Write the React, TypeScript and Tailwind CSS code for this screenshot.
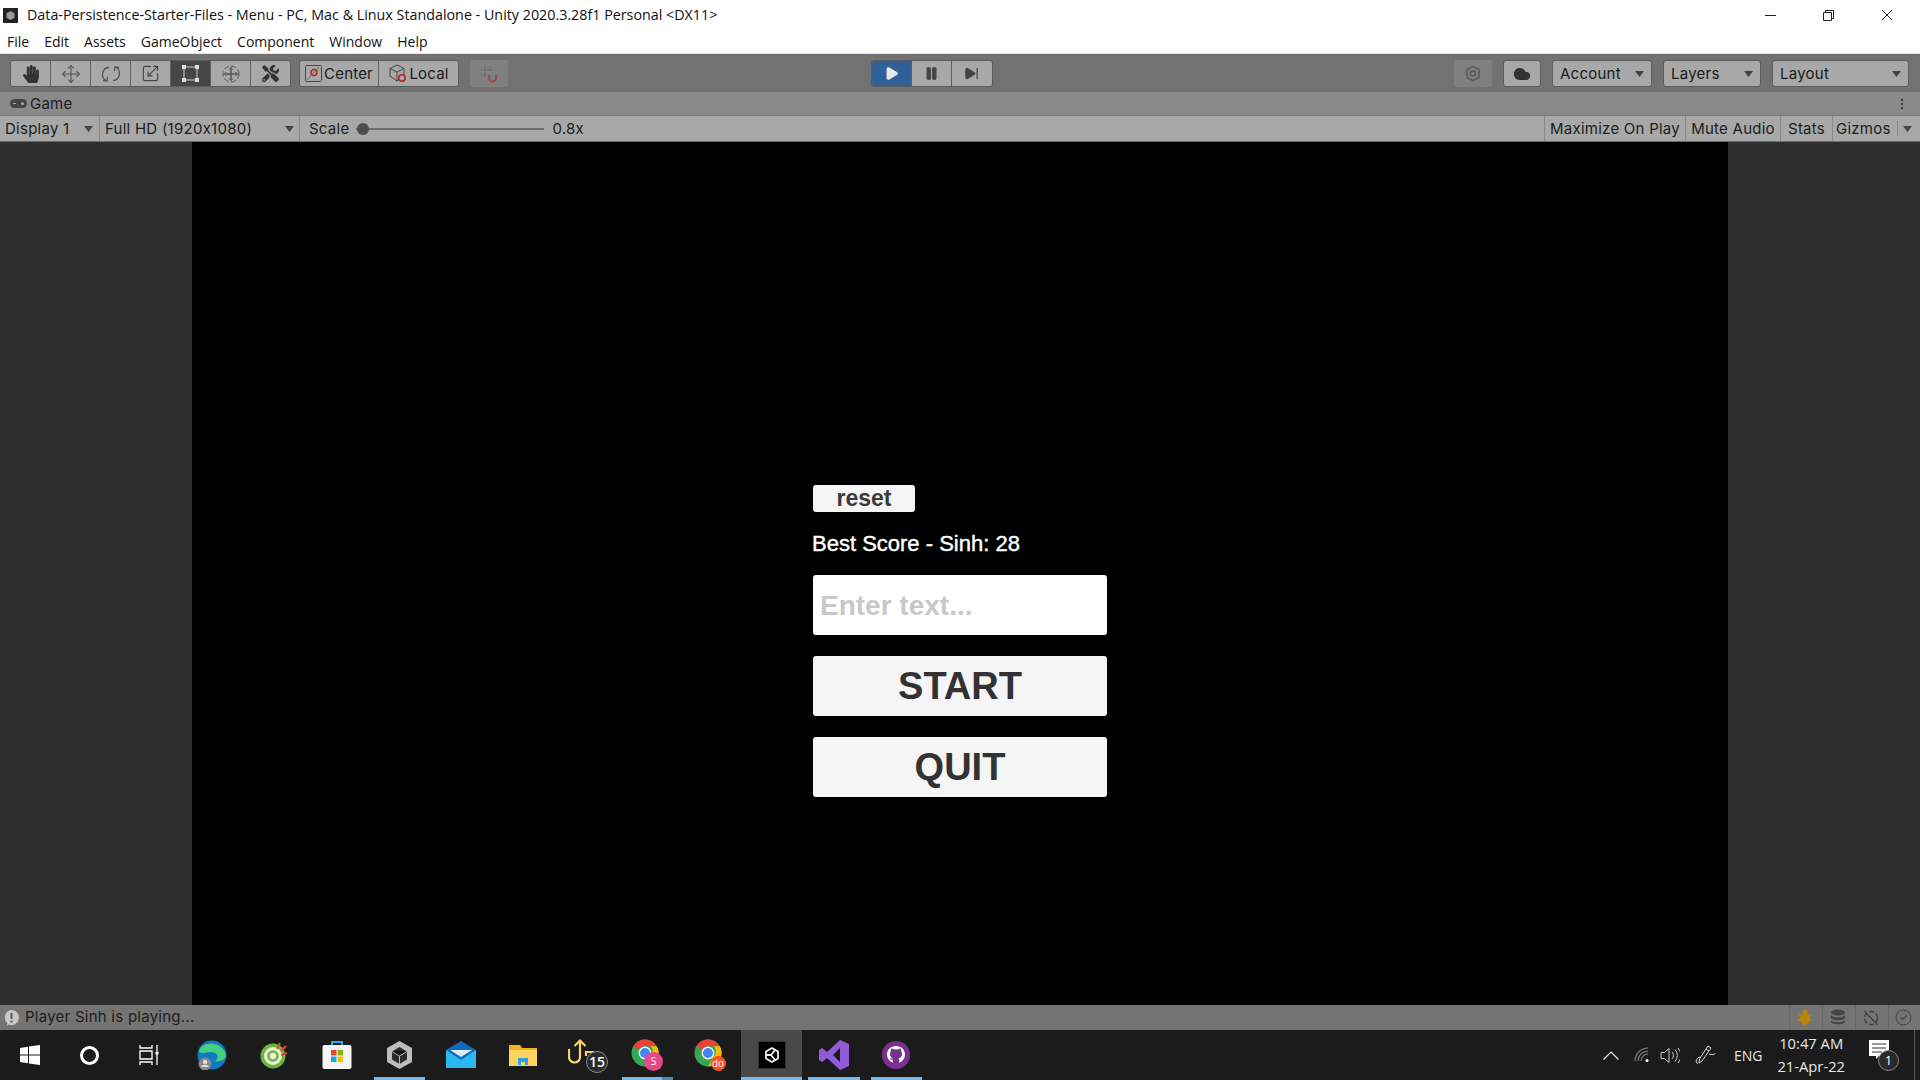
import React from "react";
import { Move, Scaling, Cloud, Play, Pause, SkipForward, MoreVertical } from "lucide-react";
import { FaHandPaper, FaTools } from "react-icons/fa";

const Caret = ({ className = "" }: { className?: string }) => (
  <svg width="9" height="6" viewBox="0 0 9 6" className={className}><path d="M0 0h9L4.5 6z" fill="#444" /></svg>
);

const ToolCell = ({ children, active, w = "w-[40px]", last }: { children: React.ReactNode; active?: boolean; w?: string; last?: boolean }) => (
  <div className={`${w} h-full flex items-center justify-center ${active ? "bg-[#464646]" : "bg-[#a8a8a8]"} ${last ? "" : "border-r border-[#636363]"}`}>{children}</div>
);

const Dropdown = ({ label, w }: { label: string; w: string }) => (
  <div className={`${w} h-[27px] rounded-[3px] bg-[#a8a8a8] border border-[#5c5c5c] flex items-center justify-between pl-[7px] pr-[7px] text-[15px] tracking-[0.25px] text-[#1a1a1a]`}>
    <span className="pt-[1px]">{label}</span><Caret />
  </div>
);

const GameBarCell = ({ children, cls }: { children: React.ReactNode; cls: string }) => (
  <div className={`h-full flex items-center border-r border-[#8a8a8a] text-[15px] tracking-[0.25px] text-[#1c1c1c] whitespace-nowrap ${cls}`}>{children}</div>
);

const TaskItem = ({ children, w = "w-[62px]", bar, active, stacked, cls = "" }: { children?: React.ReactNode; w?: string; bar?: boolean; active?: boolean; stacked?: boolean; cls?: string }) => (
  <div className={`${w} h-full relative flex items-center justify-center ${active ? "bg-[#494949]" : ""} ${cls}`}>
    {children}
    {bar && <div className={`absolute bottom-0 ${active ? "left-0 right-0" : "left-[6px] right-[5px]"} h-[3px] bg-[#76b9ed]`} />}
    {stacked && <div className="absolute bottom-0 right-[5px] w-[11px] h-[3px] bg-[#4e87b5]" />}
  </div>
);

const ChromeIcon = () => (
  <svg width="28" height="28" viewBox="0 0 28 28">
    <circle cx="14" cy="14" r="13.5" fill="#34a853" />
    <path d="M14 .5A13.5 13.5 0 0 1 25.7 7.2H14a7 7 0 0 0-6.2 3.6L2.300 7.200A13.500 13.500 0 0 1 14 .5z" fill="#ea4335" />
    <path d="M25.7 7.2A13.5 13.5 0 0 1 14 27.5l6-10.5a7 7 0 0 0 0-9.8z" fill="#fbbc04" />
    <circle cx="14" cy="14" r="6.4" fill="#fff" />
    <circle cx="14" cy="14" r="5" fill="#4285f4" />
  </svg>
);

export default function App() {
  return (
    <div className="w-[1920px] h-[1080px] overflow-hidden flex flex-col bg-white font-['Inter',sans-serif]">
      {/* Title bar */}
      <div className="h-[30px] flex items-center justify-between bg-white shrink-0">
        <div className="flex items-center">
          <div className="ml-[3px] w-[15px] h-[15px] bg-[#222] flex items-center justify-center">
            <svg width="11" height="11" viewBox="0 0 11 11"><path d="M5.5 1l4 2.300v4.400l-4 2.300-4-2.300V3.300z" fill="#999" /></svg>
          </div>
          <span className="ml-[9px] text-[14.3px] text-[#111] font-['Open_Sans',sans-serif] whitespace-nowrap">Data-Persistence-Starter-Files - Menu - PC, Mac &amp; Linux Standalone - Unity 2020.3.28f1 Personal &lt;DX11&gt;</span>
        </div>
        <div className="flex items-center gap-[47px] pr-[27px]">
          <svg width="11" height="11" viewBox="0 0 11 11"><path d="M0 5.5h11" stroke="#222" /></svg>
          <svg width="11" height="11" viewBox="0 0 11 11" fill="none" stroke="#222"><path d="M.5 2.5h8v8h-8zM2.500 2.500v-2h8v8h-2" /></svg>
          <svg width="12" height="12" viewBox="0 0 12 12"><path d="M1 1l10 10M11 1L1 11" stroke="#222" /></svg>
        </div>
      </div>
      {/* Menu */}
      <div className="h-[24px] flex items-center gap-[15px] pl-[7px] bg-white border-b border-[#e4e4e4] text-[14px] text-[#111] font-['Open_Sans',sans-serif] shrink-0 pb-[1px]">
        <span>File</span><span>Edit</span><span>Assets</span><span>GameObject</span><span>Component</span><span>Window</span><span>Help</span>
      </div>
      {/* Toolbar */}
      <div className="h-[38px] bg-[#727272] flex items-center justify-between pl-[10px] pr-[11px] shrink-0 pt-[1px]">
        <div className="flex items-center flex-1">
          <div className="flex h-[27px] rounded-[3px] overflow-hidden border border-[#5c5c5c]">
            <ToolCell><FaHandPaper size={18} color="#333" /></ToolCell>
            <ToolCell><Move size={20} stroke="#555" strokeWidth={1.3} /></ToolCell>
            <ToolCell>
              <svg width="20" height="20" viewBox="0 0 20 20" fill="none" stroke="#555" strokeWidth="1.300"><path d="M8 3.500A7 7 0 0 0 6 17l.5-4M6 17l-4-.5" /><path d="M12 16.500A7 7 0 0 0 14 3l-.5 4M14 3l4 .5" /></svg>
            </ToolCell>
            <ToolCell><Scaling size={19} stroke="#444" strokeWidth={1.4} /></ToolCell>
            <ToolCell active>
              <svg width="17" height="17" viewBox="0 0 17 17" fill="#ddd"><path d="M2 2h13v13H2z" fill="none" stroke="#ccc" /><rect x="0" y="0" width="4" height="4" /><rect x="13" y="0" width="4" height="4" /><rect x="0" y="13" width="4" height="4" /><rect x="13" y="13" width="4" height="4" /></svg>
            </ToolCell>
            <ToolCell>
              <svg width="20" height="20" viewBox="0 0 20 20" fill="none" stroke="#555"><circle cx="10" cy="10" r="8" strokeDasharray="5 2.500" /><path d="M10 3.500v13M3.500 10h13" strokeWidth="1.500" /><path d="M8 5.500l2-2 2 2M8 14.500l2 2 2-2M5.500 8l-2 2 2 2M14.500 8l2 2-2 2" /></svg>
            </ToolCell>
            <ToolCell w="w-[39px]" last><FaTools size={17} color="#333" /></ToolCell>
          </div>
          <div className="flex h-[27px] ml-[8px] rounded-[3px] overflow-hidden border border-[#5c5c5c] text-[15px] tracking-[0.2px] text-[#1a1a1a]">
            <ToolCell w="w-[79px]">
              <span className="flex items-center gap-[2px]">
                <svg width="17" height="17" viewBox="0 0 17 17" fill="none"><rect x=".5" y=".5" width="16" height="16" rx="1" stroke="#444" /><circle cx="9" cy="7.500" r="3" stroke="#b22" strokeWidth="1.500" /><path d="M2 15L14 2" stroke="#666" /></svg><span className="pt-[1px]">Center</span>
              </span>
            </ToolCell>
            <ToolCell w="w-[79px]" last>
              <span className="flex items-center gap-[1px]">
                <svg width="20" height="19" viewBox="0 0 20 19" fill="none"><path d="M9 1l7 3.500v7L9 17l-7-5V4.500zM2 4.500L9 8l7-3.500M9 8v9" stroke="#444" /><circle cx="14" cy="14" r="3.200" stroke="#b22" strokeWidth="1.500" fill="#a8a8a8" /></svg><span className="pt-[1px]">Local</span>
              </span>
            </ToolCell>
          </div>
          <div className="ml-[11px] w-[38px] h-[27px] rounded-[3px] bg-[#808080] flex items-center justify-center">
            <svg width="18" height="18" viewBox="0 0 18 18" fill="none"><path d="M5 1v12M10 1v6M1 5h12M1 10h5" stroke="#666" strokeDasharray="2 1" /><path d="M9 10v3a3.500 3.500 0 0 0 7 0v-3" stroke="#a44" strokeWidth="2" /></svg>
          </div>
        </div>
        <div className="flex h-[27px] rounded-[3px] overflow-hidden border border-[#5c5c5c] shrink-0 mr-[56px]">
          <div className="w-[40px] bg-[#2f6196] border-r border-[#5c5c5c] flex items-center justify-center"><Play size={15} fill="#e8e8e8" stroke="#e8e8e8" /></div>
          <div className="w-[40px] bg-[#a8a8a8] border-r border-[#5c5c5c] flex items-center justify-center"><Pause size={15} fill="#444" stroke="#444" /></div>
          <div className="w-[40px] bg-[#a8a8a8] flex items-center justify-center"><SkipForward size={15} fill="#444" stroke="#444" /></div>
        </div>
        <div className="flex items-center justify-end flex-1 gap-[11px]">
          <div className="w-[38px] h-[27px] rounded-[3px] bg-[#808080] flex items-center justify-center">
            <svg width="14" height="17" viewBox="0 0 14 16" fill="none" stroke="#5a5a5a" strokeWidth="1.600"><path d="M7 1l6 3v8l-6 3-6-3V4z" /><circle cx="7" cy="8" r="2.500" /></svg>
          </div>
          <div className="w-[38px] h-[27px] rounded-[3px] bg-[#a8a8a8] border border-[#5c5c5c] flex items-center justify-center"><Cloud size={18} fill="#333" stroke="#333" /></div>
          <Dropdown label="Account" w="w-[100px]" />
          <Dropdown label="Layers" w="w-[98px]" />
          <Dropdown label="Layout" w="w-[137px]" />
        </div>
      </div>
      {/* Tab strip */}
      <div className="h-[24px] bg-[#8a8a8a] border-b border-[#7a7a7a] flex items-center justify-between pl-[10px] pr-[11px] shrink-0">
        <div className="flex items-center gap-[3px] text-[15px] tracking-[0.25px] text-[#1c1c1c]">
          <svg width="17" height="11" viewBox="0 0 17 11"><rect y="1" width="17" height="9" rx="4.500" fill="#444" /><circle cx="12.500" cy="5.500" r="1.500" fill="#aaa" /><path d="M3 5.500h3" stroke="#aaa" /></svg>
          <span className="pt-[1px]">Game</span>
        </div>
        <MoreVertical size={14} stroke="#3a3a3a" />
      </div>
      {/* Game bar */}
      <div className="h-[26px] bg-[#a8a8a8] flex items-center justify-between shrink-0 border-b border-[#6a6a6a]">
        <div className="flex items-center h-full">
          <GameBarCell cls="w-[100px] justify-between pl-[5px] pr-[6px]"><span className="pt-[1px]">Display 1</span><Caret /></GameBarCell>
          <GameBarCell cls="w-[200px] justify-between pl-[5px] pr-[5px]"><span className="pt-[1px]">Full HD (1920x1080)</span><Caret /></GameBarCell>
          <div className="flex items-center text-[15px] tracking-[0.25px] text-[#1c1c1c] pl-[9px] pt-[1px]">
            <span className="pt-[1px]">Scale</span>
            <div className="ml-[7px] w-[188px] h-[2px] bg-[#6c6c6c] relative">
              <div className="absolute left-[1px] -top-[5px] w-[12px] h-[12px] rounded-full bg-[#4e4e4e]" />
            </div>
            <span className="ml-[8px] pt-[1px]">0.8x</span>
          </div>
        </div>
        <div className="flex items-center h-full border-l border-[#8a8a8a]">
          <GameBarCell cls="w-[141px] justify-center"><span className="pt-[1px]">Maximize On Play</span></GameBarCell>
          <GameBarCell cls="w-[95px] justify-center"><span className="pt-[1px]">Mute Audio</span></GameBarCell>
          <GameBarCell cls="w-[52px] justify-center"><span className="pt-[1px]">Stats</span></GameBarCell>
          <div className="w-[87px] h-full flex items-center text-[15px] tracking-[0.25px] text-[#1c1c1c] pl-[3px]">
            <span className="pt-[1px]">Gizmos</span><div className="ml-[6px] w-[1px] h-[15px] bg-[#8a8a8a]" /><Caret className="ml-[5px]" />
          </div>
        </div>
      </div>
      {/* Game view */}
      <div className="flex-1 bg-[#2e2e2e] flex justify-center min-h-0">
        <div className="w-[1536px] h-full bg-black flex justify-center">
          <div className="w-[294px] pt-[343px] font-['Liberation_Sans',sans-serif] flex flex-col">
            <div className="w-[102px] h-[27px] rounded-[3px] bg-[#f5f5f5] flex items-center justify-center text-[23px] leading-none font-bold text-[#3a3a3a]">reset</div>
            <div className="mt-[17px] h-[29px] flex items-center -ml-[1px] text-[22px] text-white whitespace-nowrap [-webkit-text-stroke:0.4px_#fff]">Best Score - Sinh: 28</div>
            <div className="mt-[17px] h-[60px] rounded-[3px] bg-white flex items-center pl-[7px] pt-[1px] text-[28px] font-bold text-[#c8c8c8]">Enter text...</div>
            <div className="mt-[21px] h-[60px] rounded-[3px] bg-[#f5f5f5] flex items-center justify-center text-[38px] font-bold text-[#323232]">START</div>
            <div className="mt-[21px] h-[60px] rounded-[3px] bg-[#f5f5f5] flex items-center justify-center pt-[1px] text-[38px] font-bold text-[#323232]">QUIT</div>
          </div>
        </div>
      </div>
      {/* Status bar */}
      <div className="h-[25px] bg-[#747474] flex items-center justify-between shrink-0">
        <div className="flex items-center">
          <svg className="ml-[3px]" width="17" height="18" viewBox="0 0 17 18"><path d="M8.500 1a7.500 7.500 0 1 1-3 14.400L4 17l.3-3A7.500 7.500 0 0 1 8.500 1z" fill="#c8c8c8" /><path d="M8.500 4v6M8.500 11.500v2" stroke="#555" strokeWidth="2" /></svg>
          <span className="ml-[5px] text-[15px] tracking-[0.25px] text-[#1c1c1c]">Player Sinh is playing...</span>
        </div>
        <div className="flex items-center h-full">
          <div className="w-[33px] h-full border-l border-[#666] flex items-center justify-center">
            <svg width="16" height="18" viewBox="0 0 16 18"><ellipse cx="7" cy="10" rx="5" ry="6" fill="#b8860b" /><circle cx="7" cy="3" r="2.500" fill="#b8860b" /><path d="M1 5l3 3M13 5l-3 3M0 11h3M11 11h3" stroke="#b8860b" strokeWidth="1.500" /></svg>
          </div>
          <div className="w-[33px] h-full border-l border-[#666] flex items-center justify-center pr-[2px]">
            <svg width="17" height="17" viewBox="0 0 17 17" fill="#444"><ellipse cx="8" cy="3.500" rx="7" ry="3" /><path d="M1 6c1 3 13 3 14 0v3c-1 3-13 3-14 0zM1 11c1 3 13 3 14 0v2c-1 3-13 3-14 0z" /></svg>
          </div>
          <div className="w-[33px] h-full border-l border-[#666] flex items-center justify-center pr-[2px]">
            <svg width="18" height="18" viewBox="0 0 18 18" fill="none" stroke="#444" strokeWidth="1.500"><circle cx="9" cy="9" r="6.500" strokeDasharray="5 2" /><path d="M2 2l14 14" /></svg>
          </div>
          <div className="w-[32px] h-full border-l border-[#666] flex items-center justify-center pr-[2px]">
            <svg width="17" height="17" viewBox="0 0 17 17" fill="none" stroke="#444"><circle cx="8.500" cy="8.500" r="7.500" /><path d="M5.500 8.500l2 2 4-4" strokeWidth="1.300" /></svg>
          </div>
        </div>
      </div>
      {/* Taskbar */}
      <div className="h-[50px] bg-[#1b1b1b] flex items-stretch justify-between shrink-0 font-['Open_Sans',sans-serif] text-[#e8e8e8]">
        <div className="flex h-full items-center">
          <TaskItem w="w-[60px]"><svg width="20" height="20" viewBox="0 0 20 20" fill="#fff"><path d="M0 3l8-1.200V9.500H0zM9 1.600L20 0v9.500H9zM0 10.500h8v7.700L0 17zM9 10.500h11V20L9 18.400z" /></svg></TaskItem>
          <TaskItem w="w-[58px]"><div className="w-[19px] h-[19px] rounded-full border-[3px] border-white" /></TaskItem>
          <TaskItem w="w-[62px]" cls="mr-[1px]"><svg width="20" height="20" viewBox="0 0 20 20" fill="none" stroke="#fff" strokeWidth="1.300"><path d="M1 0v3h12V0M1 6h12v8H1zM1 20v-3h12v3M18 0v6M18 9v11" /><rect x="16.500" y="6.500" width="3" height="3" fill="#fff" stroke="none" /></svg></TaskItem>
          <TaskItem>
            <svg width="30" height="30" viewBox="0 0 30 30"><circle cx="15" cy="15" r="14.500" fill="#0c7bc4" /><path d="M2 11C5 1 25 0 29 15c0 5-6 7-11 6 5-3 3-9-4-9-5 0-10 3-12-1z" fill="#45d07f" /><circle cx="8" cy="24" r="6.500" fill="#888" /><circle cx="8" cy="22" r="2.200" fill="#ddd" /><path d="M4 27c1-3 7-3 8 0z" fill="#ddd" /></svg>
          </TaskItem>
          <TaskItem>
            <svg width="28" height="30" viewBox="0 0 28 30"><circle cx="13" cy="16" r="12.500" fill="#6cb33f" /><circle cx="13" cy="16" r="9" fill="#e8f0d8" /><circle cx="13" cy="16" r="4.500" fill="none" stroke="#6cb33f" strokeWidth="2.500" /><path d="M20 3l-3 6M26 6l-5 5M27 13l-6 2" stroke="#e04a2f" strokeWidth="2" /></svg>
          </TaskItem>
          <TaskItem w="w-[63px]">
            <svg width="30" height="30" viewBox="0 0 30 30"><path d="M10 6V2h10v4" fill="none" stroke="#2ea8e6" strokeWidth="2" /><rect x="0.500" y="5" width="29" height="24" rx="2" fill="#f6f6f6" /><rect x="9" y="10" width="5.500" height="5.500" fill="#e8462a" /><rect x="15.500" y="10" width="5.500" height="5.500" fill="#7fba00" /><rect x="9" y="16.500" width="5.500" height="5.500" fill="#0ea5e9" /><rect x="15.500" y="16.500" width="5.500" height="5.500" fill="#ffb900" /></svg>
          </TaskItem>
          <TaskItem bar>
            <svg width="27" height="28" viewBox="0 0 27 28"><path d="M13.500 0L26 7v14l-12.500 7L1 21V7z" fill="#bdbdbd" /><path d="M13.500 6L21 10.500v8L13.500 23 6 18.500v-8z" fill="#2a2a2a" /><path d="M6 10.500l7.500 4.500 7.500-4.500M13.500 15v8" stroke="#bbb" /></svg>
          </TaskItem>
          <TaskItem>
            <svg width="30" height="28" viewBox="0 0 30 28"><path d="M0 9L15 0l15 9v18H0z" fill="#0f6cbd" /><path d="M0 9l15 10L30 9v18H0z" fill="#2cb7ef" /><path d="M4 9h22l-11 7z" fill="#d9eef9" /></svg>
          </TaskItem>
          <TaskItem>
            <svg width="28" height="24" viewBox="0 0 28 24"><path d="M0 2h11l2 3h15v18H0z" fill="#f0b429" /><path d="M0 7h28v16H0z" fill="#fcd462" /><path d="M9 15h10v7h-3v-3h-4v3H9z" fill="#2fa4e7" /></svg>
          </TaskItem>
          <TaskItem>
            <div className="relative w-[40px] h-[35px] ml-[6px]">
              <svg width="30" height="30" viewBox="0 0 30 30" fill="none" stroke="#f6d56b" strokeWidth="2.200" className="absolute left-0 top-0"><path d="M12 3v16a5.500 5.500 0 0 1-11 0V11M6.500 8L12 2.500 17.500 8" /><path d="M18 18v-4h7l2 3v3" /></svg>
              <div className="absolute right-0 bottom-0 w-[22px] h-[22px] rounded-full bg-[#2a2a2a] border border-[#8a8a8a] flex items-center justify-center text-[14px] font-semibold text-white">15</div>
            </div>
          </TaskItem>
          <TaskItem bar stacked>
            <div className="relative w-[32px] h-[32px]">
              <ChromeIcon />
              <div className="absolute right-0 bottom-0 w-[19px] h-[19px] rounded-full bg-[#e8478a] flex items-center justify-center text-[11px] text-white">S</div>
            </div>
          </TaskItem>
          <TaskItem w="w-[63px]">
            <div className="relative w-[32px] h-[32px]">
              <ChromeIcon />
              <div className="absolute right-0 bottom-0 w-[15px] h-[15px] rounded-full bg-[#f4511e] flex items-center justify-center text-[10px] text-white">do</div>
            </div>
          </TaskItem>
          <TaskItem w="w-[61px]" bar active>
            <div className="w-[28px] h-[28px] bg-black border border-[#333] flex items-center justify-center">
              <svg width="18" height="18" viewBox="0 0 18 18" fill="none" stroke="#eee" strokeWidth="1.800"><path d="M9 2l6 3.500v7L9 16l-6-3.500v-7z" /><path d="M3 9h5l4-5M8 9l4 5" /></svg>
            </div>
          </TaskItem>
          <TaskItem w="w-[63px]" bar>
            <svg width="30" height="30" viewBox="0 0 30 30"><path d="M21 0l9 4v22l-9 4L8 18l-5 4-3-2V10l3-2 5 4zM21 8l-7 7 7 7z" fill="#8f5bd6" /></svg>
          </TaskItem>
          <TaskItem bar>
            <svg width="30" height="30" viewBox="0 0 30 30"><circle cx="15" cy="15" r="14" fill="#7b2f8e" /><path d="M15 6c-5 0-9 3.500-9 8.500 0 3.800 2.500 7 5.800 8.200v-3c-2.500.5-3-1.200-3-1.200h3.600c-2-.5-3.400-2-3.400-4.500 0-1.200.4-2.200 1-3-.2-.5-.3-1.500.1-2.500 1 0 2 .5 2.800 1a9 9 0 0 1 4.200 0c.8-.5 1.800-1 2.800-1 .4 1 .3 2 .1 2.500.6.800 1 1.800 1 3 0 2.500-1.400 4-3.400 4.500.5.500.7 1.200.7 2v2.200c3.300-1.200 5.700-4.400 5.700-8.200C24 9.500 20 6 15 6z" fill="#fff" /></svg>
          </TaskItem>
        </div>
        <div className="flex items-center h-full">
          <svg width="16" height="9" viewBox="0 0 16 9" fill="none" stroke="#eee" strokeWidth="1.200"><path d="M.5 8.500L8 1l7.500 7.500" /></svg>
          <svg width="16" height="16" viewBox="0 0 16 16" fill="none" stroke="#888" strokeWidth="1.100" className="ml-[15px]"><path d="M1 14a13 13 0 0 1 13-13M4 14a10 10 0 0 1 10-10M7 14a7 7 0 0 1 7-7" /><circle cx="13" cy="13.500" r="1.500" fill="#fff" stroke="none" /></svg>
          <svg width="20" height="17" viewBox="0 0 20 17" fill="none" stroke="#ddd" className="ml-[10px]"><path d="M1 5.500h3.500L9 1.500v14l-4.500-4H1zM12 5a5 5 0 0 1 0 7M15 2.500a9 9 0 0 1 0 12M18 1a11 11 0 0 1 0 15" stroke="#ccc" /></svg>
          <svg width="21" height="21" viewBox="0 0 21 21" fill="none" stroke="#ddd" className="ml-[15px]"><path d="M13 1l3 2-9 13-3 2 .5-4zM11 4l3 2" /><path d="M14 9c3 1 6 1 6-1M5 12c-4 1-5 5-2 7" /></svg>
          <span className="ml-[18px] text-[14px]">ENG</span>
          <div className="ml-[15px] flex flex-col items-center text-[14.75px] leading-[23px]">
            <span>10:47 AM</span><span>21-Apr-22</span>
          </div>
          <div className="ml-[24px] w-[32px] h-[34px] relative">
            <svg width="20" height="20" viewBox="0 0 20 20" className="absolute left-0 top-[2px]"><path d="M0 0h20v16H10l-3 3v-3H0z" fill="#fff" /><path d="M3 4h14M3 8h14M3 12h10" stroke="#333" /></svg>
            <div className="absolute left-[9px] top-[12px] w-[21px] h-[21px] rounded-full bg-[#2a2a2a] border border-[#8a8a8a] flex items-center justify-center text-[13px] text-white">1</div>
          </div>
          <div className="ml-[13px] w-[1px] h-full bg-[#555]" />
          <div className="w-[5px]" />
        </div>
      </div>
    </div>
  );
}
